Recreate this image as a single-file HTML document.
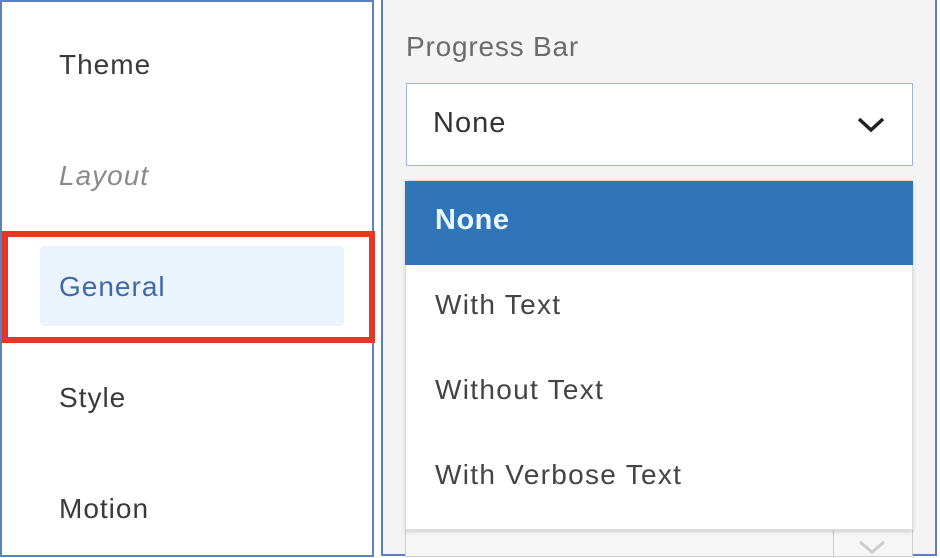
<!DOCTYPE html>
<html><head><meta charset="utf-8"><style>
*{margin:0;padding:0;box-sizing:border-box}
body{width:940px;height:558px;background:#fff;position:relative;overflow:hidden;font-family:"Liberation Sans",sans-serif}
.a{position:absolute}
.left{left:0;top:0;width:374px;height:557px;border:2px solid #5d80c0;background:#fff}
.nav{position:absolute;left:59px;font-size:28px;letter-spacing:1px;color:#3a3a3a;line-height:30px}
.right{left:381px;top:0;width:556px;height:556px;border:2px solid #5d80c0;background:#f4f4f4;border-top:none}
.item{position:absolute;left:435px;font-size:28px;letter-spacing:1.3px;color:#444;line-height:30px}
</style></head><body>
<div class="a left"></div>
<div class="a" style="left:40px;top:246px;width:304px;height:80px;background:#ebf3fc;border-radius:4px"></div>
<div class="nav" style="top:50px">Theme</div>
<div class="nav" style="top:161px;font-style:italic;color:#8a8a8a">Layout</div>
<div class="nav" style="top:272px;color:#3f6aa8">General</div>
<div class="nav" style="top:383px">Style</div>
<div class="nav" style="top:494px">Motion</div>
<div class="a" style="left:2px;top:231px;width:373px;height:112px;border:6px solid #e8352a"></div>

<div class="a right"></div>
<div class="a" style="left:406px;top:31px;font-size:28px;letter-spacing:0.8px;color:#6b6b6b">Progress Bar</div>
<div class="a" style="left:406px;top:83px;width:507px;height:83px;background:#fff;border:1px solid #9fb6d6"></div>
<div class="a" style="left:433px;top:107px;font-size:29px;letter-spacing:1px;color:#333">None</div>
<svg class="a" style="left:856px;top:116px" width="30" height="18"><path d="M3 3 L15 14 L27 3" stroke="#222" stroke-width="3.5" fill="none"/></svg>
<div class="a" style="left:405px;top:525px;width:508px;height:32px;background:#f6f6f6;border:1px solid #ccc"></div>
<div class="a" style="left:833px;top:525px;width:1px;height:32px;background:#ccc"></div>
<svg class="a" style="left:857px;top:540px" width="30" height="14"><path d="M3 2 L15 12 L27 2" stroke="#ccc" stroke-width="3" fill="none"/></svg>
<div class="a" style="left:405px;top:180px;width:508px;height:350px;background:#fff;border:1px solid #ddd;box-shadow:0 2px 4px rgba(0,0,0,.15)"></div>
<div class="a" style="left:405px;top:181px;width:508px;height:84px;background:#3274b8"></div>
<div class="a" style="left:435px;top:204px;font-size:29px;letter-spacing:0.5px;font-weight:bold;color:#e8f6ff">None</div>
<div class="item" style="top:290px">With Text</div>
<div class="item" style="top:375px">Without Text</div>
<div class="item" style="top:460px">With Verbose Text</div>
</body></html>
